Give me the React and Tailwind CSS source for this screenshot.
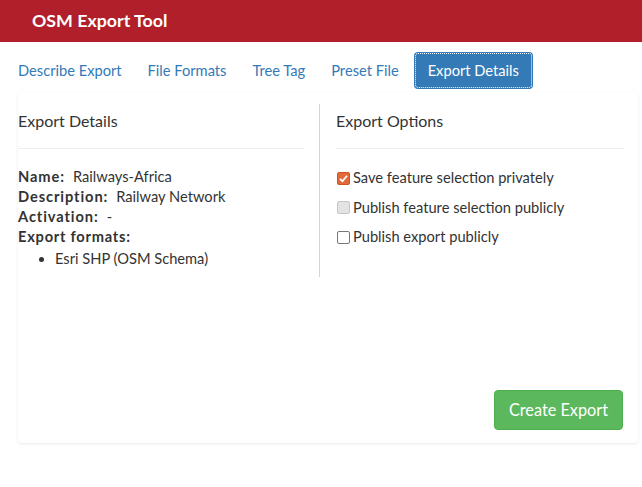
import React from 'react';

const tabs = ['Describe Export', 'File Formats', 'Tree Tag', 'Preset File', 'Export Details'];

const details = [
  { label: 'Name:', value: 'Railways-Africa' },
  { label: 'Description:', value: 'Railway Network' },
  { label: 'Activation:', value: '-' },
];

const CheckBox = ({ state }) => {
  if (state === 'checked') {
    return (
      <span className="w-[13px] h-[13px] rounded-[2px] bg-[#e4683a] border border-[#c9552b] flex items-center justify-center">
        <svg width="11" height="11" viewBox="0 0 12 12">
          <path d="M2.2 6.4 L4.8 9 L9.8 3" fill="none" stroke="white" strokeWidth="2" />
        </svg>
      </span>
    );
  }
  if (state === 'disabled') {
    return <span className="w-[13px] h-[13px] rounded-[2px] bg-[#e3e3e3] border border-[#c6c6c6]" />;
  }
  return <span className="w-[13px] h-[13px] rounded-[2px] bg-white border border-[#767676]" />;
};

const options = [
  { text: 'Save feature selection privately', state: 'checked' },
  { text: 'Publish feature selection publicly', state: 'disabled' },
  { text: 'Publish export publicly', state: 'off' },
];

export default function App() {
  return (
    <div className="w-[642px] h-[487px] bg-white text-[#333] font-['Lato','Liberation_Sans',sans-serif]">
      {/* Header */}
      <div className="h-[42px] bg-[#b01f2a] flex items-center pl-[32px]">
        <span className="text-white font-bold text-[17.8px] leading-none">OSM Export Tool</span>
      </div>

      {/* Tabs */}
      <div className="flex items-center pl-[5px] mt-[10px] h-[37px]">
        {tabs.map((t) => {
          const active = t === 'Export Details';
          return (
            <div
              key={t}
              className={
                active
                  ? 'h-[37px] ml-[2px] px-[14px] flex items-center rounded-[4px] bg-[#337ab7] text-white text-[14.67px] outline-1 outline-dotted outline-white outline-offset-[-2px]'
                  : 'h-[37px] px-[13px] flex items-center text-[#337ab7] text-[14.67px]'
              }
            >
              {t}
            </div>
          );
        })}
      </div>

      {/* Card */}
      <div className="ml-[18px] mt-[3px] w-[620px] rounded-[4px] bg-white shadow-[0_1px_3px_rgba(0,0,0,0.09)] pt-[12px] pb-[13px]">
        <div className="flex">
          <div className="w-[302px] pr-[15px] border-r border-[#d4d4d4] pt-[5px] pb-[8px]">
            <h3 className="text-[16px] leading-[24px]">Export Details</h3>
            <div className="mt-[15px] border-t border-[#eeeeee]" />
            <div className="mt-[18px] text-[14.67px] leading-[20px]">
              {details.map((d) => (
                <div key={d.label}>
                  <span className="font-bold tracking-[0.9px]">{d.label}</span>
                  <span className="ml-[8px]">{d.value}</span>
                </div>
              ))}
              <div className="font-bold tracking-[0.75px]">Export formats:</div>
              <ul className="list-disc pl-[37px] mt-[2px]">
                <li>Esri SHP (OSM Schema)</li>
              </ul>
            </div>
          </div>

          <div className="flex-1 pl-[16px] pr-[14px] pt-[5px]">
            <h3 className="text-[16px] leading-[24px]">Export Options</h3>
            <div className="mt-[15px] border-t border-[#eeeeee]" />
            <div className="mt-[19px] flex flex-col gap-[9.5px] text-[14.67px] leading-[20px]">
              {options.map((o) => (
                <label key={o.text} className="flex items-center gap-[3px] pl-[1px]">
                  <CheckBox state={o.state} />
                  <span>{o.text}</span>
                </label>
              ))}
            </div>
          </div>
        </div>

        <div className="flex justify-end pr-[15px] mt-[113px]">
          <button className="w-[129px] h-[40px] pt-[1px] rounded-[4px] bg-[#5cb85c] border border-[#4cae4c] text-white text-[16.3px]">
            Create Export
          </button>
        </div>
      </div>
    </div>
  );
}
